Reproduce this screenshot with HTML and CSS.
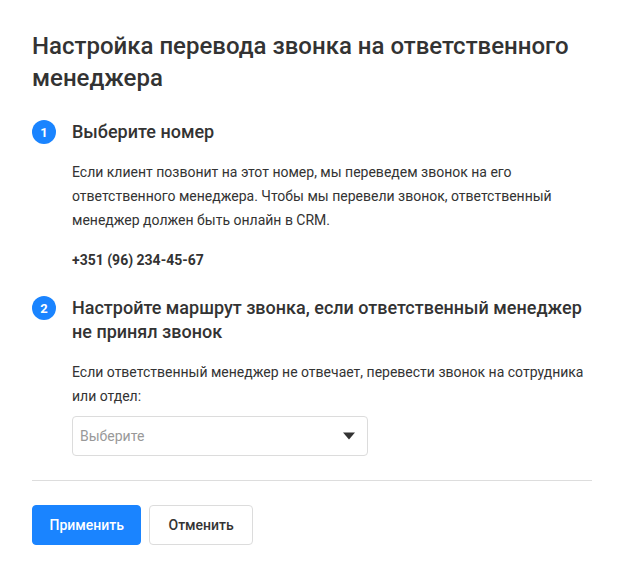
FILE: index.html
```html
<!DOCTYPE html>
<html lang="ru">
<head>
  <meta charset="UTF-8">
  <meta name="viewport" content="width=device-width, initial-scale=1.0">
  <link rel="stylesheet" href="styles.css">
  <title>Настройка перевода звонка</title>
</head>
<body>
  <div class="panel">
    <h1 class="title">Настройка перевода звонка на ответственного менеджера</h1>

    <section class="step">
      <div class="stepNum">1</div>
      <div class="stepBody">
        <h2 class="stepTitle">Выберите номер</h2>
        <p class="stepText">Если клиент позвонит на этот номер, мы переведем звонок на его ответственного менеджера. Чтобы мы перевели звонок, ответственный менеджер должен быть онлайн в CRM.</p>
        <div class="phone">+351 (96) 234-45-67</div>
      </div>
    </section>

    <section class="step">
      <div class="stepNum">2</div>
      <div class="stepBody">
        <h2 class="stepTitle">Настройте маршрут звонка, если ответственный менеджер не принял звонок</h2>
        <p class="stepText">Если ответственный менеджер не отвечает, перевести звонок на сотрудника или отдел:</p>
        <div class="select">
          <span class="placeholder">Выберите</span>
          <svg class="caret" width="12" height="8" viewBox="0 0 12 8"><path d="M0 0.5h12L6 7.5z" fill="#333"/></svg>
        </div>
      </div>
    </section>

    <div class="actions">
      <button class="btn btnPrimary" type="submit">Применить</button>
      <button class="btn btnDefault" type="button">Отменить</button>
    </div>
  </div>
</body>
</html>
```

FILE: styles.css
```css
*{box-sizing: border-box;}
body
{
  margin: 0;
  background-color: #fff;
  font-family: Roboto, "Liberation Sans", sans-serif;
  color: #333;
}
.panel
{
  padding: 30px 32px 32px;
}
.title
{
  margin: 0 0 26px;
  font-size: 24px;
  line-height: 32px;
  font-weight: 500;
}
.step
{
  display: flex;
  gap: 16px;
  margin-bottom: 24px;
}
.stepNum
{
  flex: none;
  display: grid;
  place-content: center;
  width: 24px;
  height: 24px;
  border-radius: 50%;
  font-size: 13px;
  font-weight: 700;
  color: #fff;
  background-color: #1a84ff;
}
.stepBody
{
  flex: 1;
}
.stepTitle
{
  margin: 0 0 16px;
  font-size: 18px;
  line-height: 24px;
  font-weight: 500;
}
.stepText
{
  margin: 0;
  font-size: 14px;
  line-height: 24px;
}
.phone
{
  margin-top: 16px;
  font-size: 14px;
  line-height: 24px;
  font-weight: 700;
}
.select
{
  display: flex;
  align-items: center;
  justify-content: space-between;
  width: 296px;
  height: 40px;
  margin-top: 8px;
  padding: 0 12px 0 7px;
  border: 1px solid #dcdcdc;
  border-radius: 4px;
  font-size: 14px;
  color: #999;
}
.actions
{
  display: flex;
  gap: 8px;
  padding-top: 24px;
  border-top: 1px solid #ddd;
}
.btn
{
  height: 40px;
  padding: 0 16.5px;
  border-radius: 4px;
  font-family: inherit;
  font-size: 14px;
  font-weight: 500;
  cursor: pointer;
}
.btnPrimary
{
  border: 1px solid #1a84ff;
  color: #fff;
  background-color: #1a84ff;
}
.btnDefault
{
  padding: 0 18px;
  border: 1px solid #dcdcdc;
  color: #333;
  background-color: #fff;
}
```
